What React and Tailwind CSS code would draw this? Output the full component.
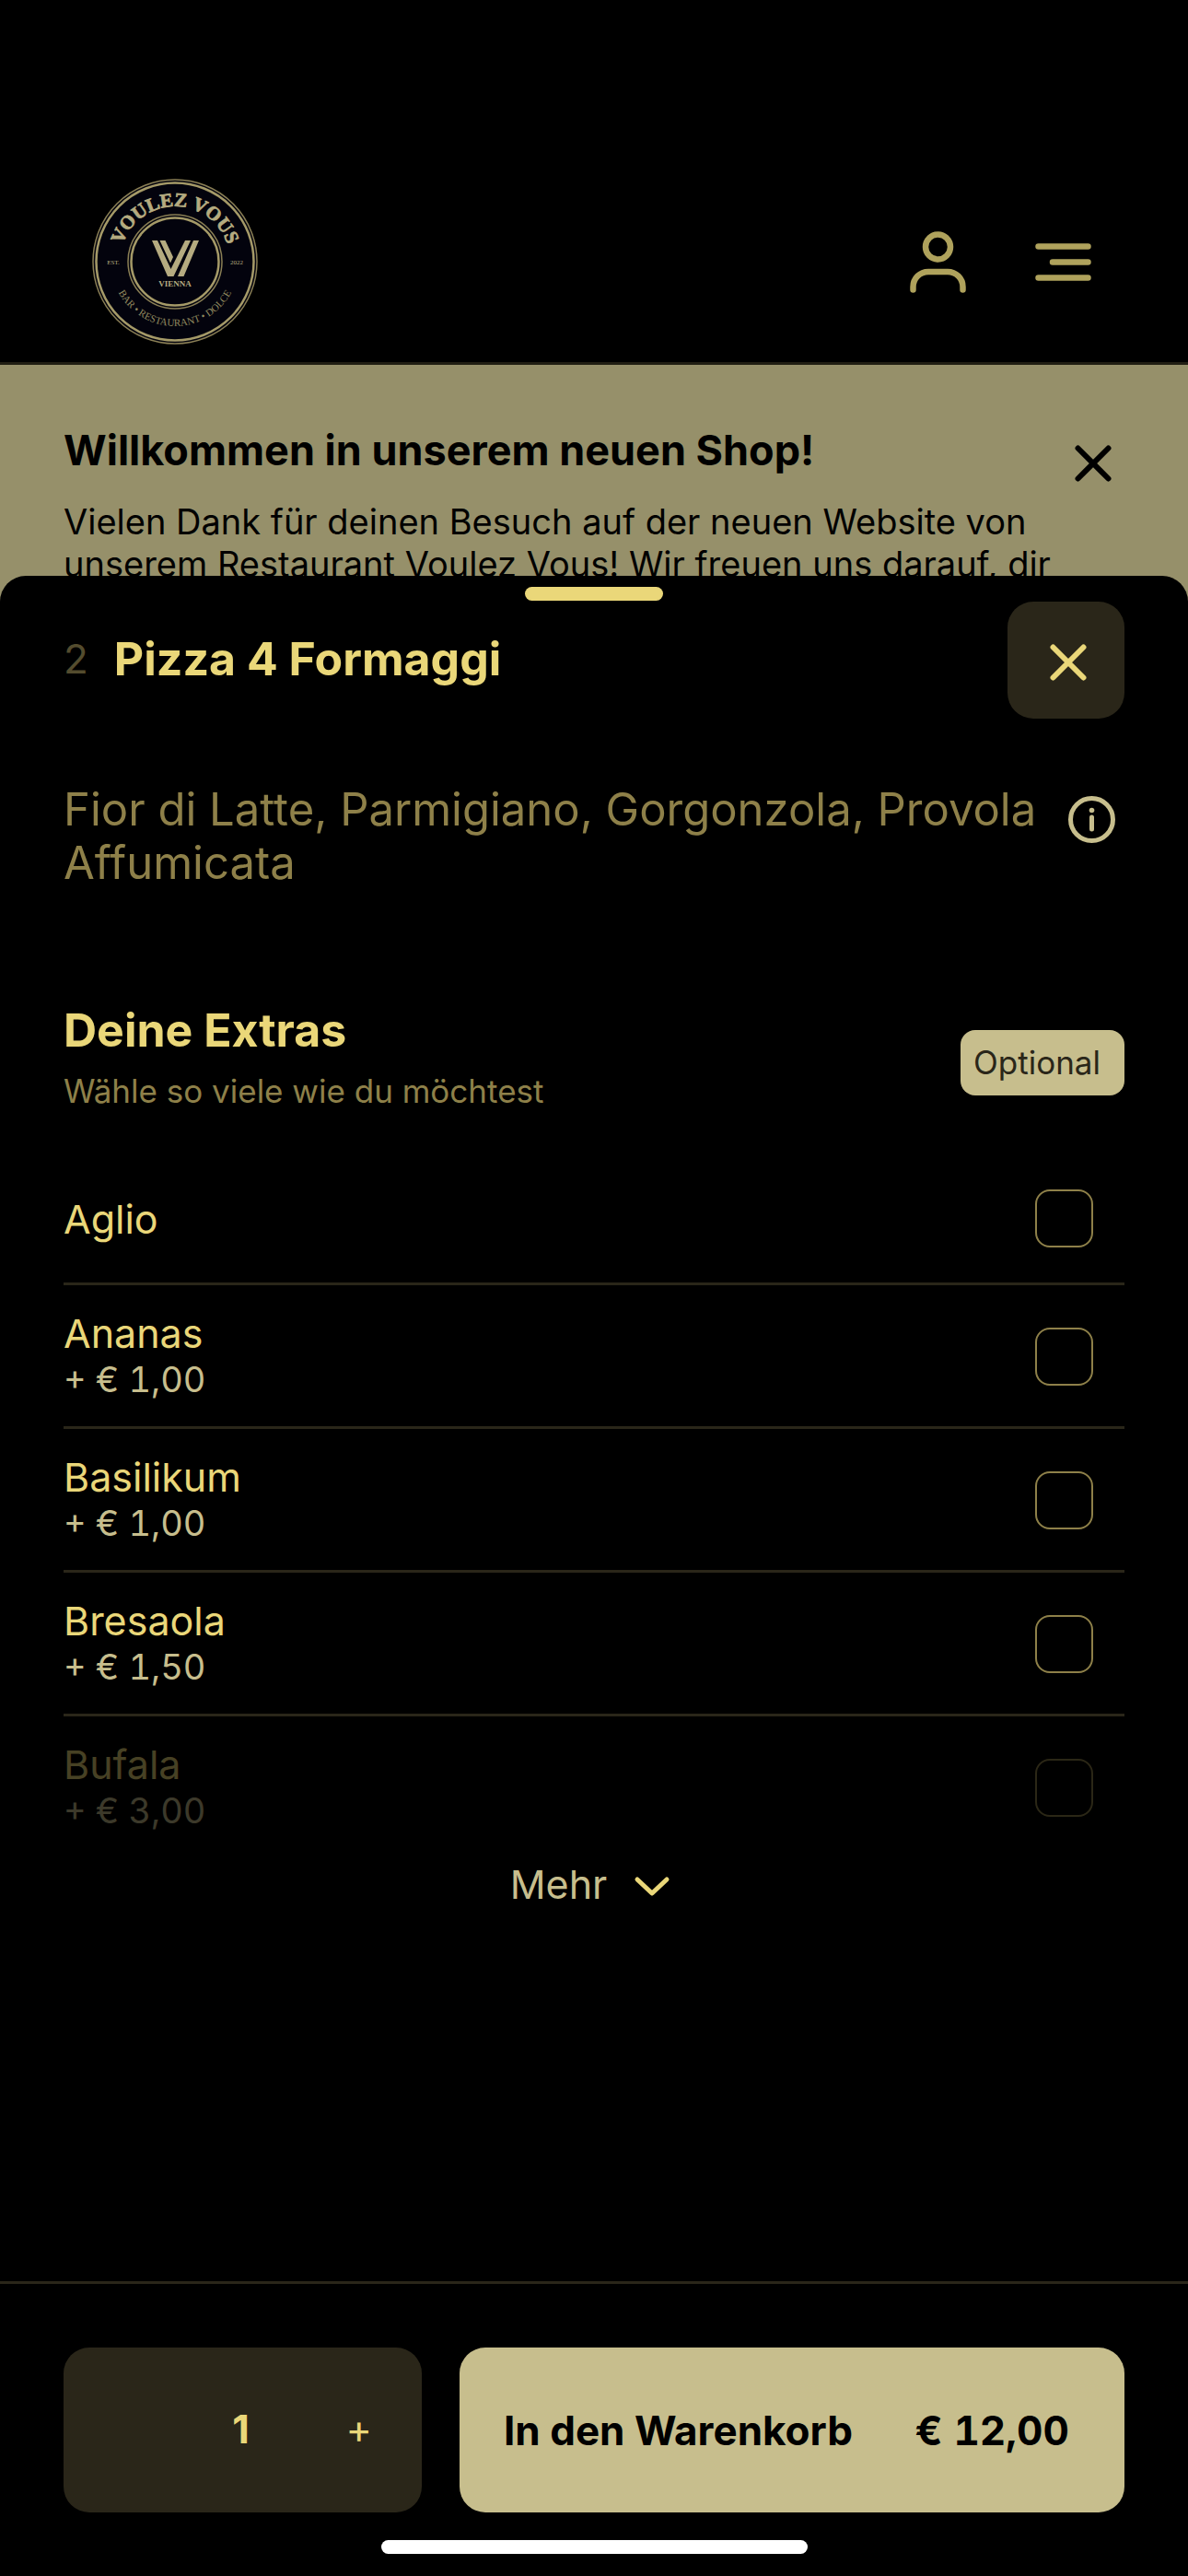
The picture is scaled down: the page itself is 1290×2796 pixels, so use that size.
import React, { useState } from "react";

const extras = [
  { id: "aglio", name: "Aglio" },
  { id: "ananas", name: "Ananas", price: "+ € 1,00" },
  { id: "basilikum", name: "Basilikum", price: "+ € 1,00" },
  { id: "bresaola", name: "Bresaola", price: "+ € 1,50" },
  { id: "bufala", name: "Bufala", price: "+ € 3,00", faded: true },
];

const Logo = () => {
  return (
    <svg
      viewBox="0 0 180 180"
      className="size-[180px]"
      role="img"
      aria-label="Voulez Vous"
    >
      <defs>
        <path id="arc-top" d="M30 90a60 60 0 0 1 120 0" />
        <path id="arc-bottom" d="M20 90a70 70 0 0 0 140 0" />
      </defs>
      <circle cx="90" cy="90" r="89" fill="#03030d" stroke="#8a7f55" strokeWidth="1.5" />
      <circle cx="90" cy="90" r="85.5" fill="none" stroke="#a59a68" strokeWidth="2.5" />
      <circle cx="90" cy="90" r="51" fill="none" stroke="#8a7f55" strokeWidth="1.5" />
      <circle cx="90" cy="90" r="47.5" fill="none" stroke="#a59a68" strokeWidth="2.5" />
      <g fill="#b5ab80" fontFamily="'Liberation Serif', serif" textAnchor="middle">
        <g fontWeight="700">
          <text fontSize="21" stroke="#b5ab80" strokeWidth="0.8">
            <textPath href="#arc-top" startOffset="50%">
              VOULEZ VOUS
            </textPath>
          </text>
          <text x="90" y="117" fontSize="9">
            VIENNA
          </text>
        </g>
        <text fontSize="11" fill="#91895f">
          <textPath href="#arc-bottom" startOffset="50%">
            BAR • RESTAURANT • DOLCE
          </textPath>
        </text>
        <text x="23" y="93" fontSize="7">
          EST.
        </text>
        <text x="157" y="93" fontSize="7">
          2022
        </text>
      </g>
      <path
        d="M65 67h6l14.500 31L101 67h6L88.500 106H82zM73.500 67h6l8.500 18-3 6.500zM110 67h6L99.500 106h-6.500z"
        fill="#b5ab80"
      />
    </svg>
  );
};

const CrossIcon = () => {
  return (
    <svg
      viewBox="0 0 40 40"
      className="size-10"
      fill="none"
      stroke="currentColor"
      strokeWidth="6"
      strokeLinecap="round"
      aria-hidden="true"
    >
      <path d="M3.500 3.500l33 33M36.500 3.500l-33 33" />
    </svg>
  );
};

const Header = () => {
  return (
    <header className="flex items-center justify-between border-b-3 border-[#211e13] pt-[194px] pr-[105px] pb-[19px] pl-[100px]">
      <a href="#home">
        <Logo />
      </a>
      <nav className="flex items-center gap-[75px] text-[#afa25c]">
        <button type="button" aria-label="Konto">
          <svg
            viewBox="0 0 61 67"
            className="h-[67px] w-[61px]"
            fill="none"
            stroke="currentColor"
            strokeWidth="6.5"
            strokeLinecap="round"
          >
            <circle cx="30.500" cy="17" r="13.500" />
            <path d="M3.500 63.500V60.500C3.500 51 11 44 20 44H41C50 44 57.500 51 57.500 60.500V63.500" />
          </svg>
        </button>
        <button type="button" aria-label="Menü">
          <svg
            viewBox="0 0 61 41"
            className="h-[41px] w-[61px]"
            fill="none"
            stroke="currentColor"
            strokeWidth="6.5"
            strokeLinecap="round"
          >
            <path d="M3.500 3.500H57.500M19 20.500H57.500M3.500 37.500H57.500" />
          </svg>
        </button>
      </nav>
    </header>
  );
};

const Banner = () => {
  return (
    <section className="flex items-start justify-between bg-[#96906a] pt-[67px] pr-[83px] pb-[26px] pl-[69px] text-black">
      <div>
        <h2 className="text-[45px] leading-[52px] font-bold">
          Willkommen in unserem neuen Shop!
        </h2>
        <p className="mt-7 max-w-[1090px] text-[38px] leading-[46px]">
          Vielen Dank für deinen Besuch auf der neuen Website von unserem
          Restaurant Voulez Vous! Wir freuen uns darauf, dir
        </p>
      </div>
      <button type="button" aria-label="Hinweis schließen" className="mt-5 -ml-10">
        <CrossIcon />
      </button>
    </section>
  );
};

const ExtraRow = ({ extra }) => {
  const [checked, setChecked] = useState(false);

  return (
    <li
      className={
        extra.faded ? "opacity-30" : "border-b-3 border-[#2a2619]"
      }
    >
      <label
        htmlFor={extra.id}
        className={
          extra.price
            ? "flex items-center justify-between pt-[26px] pr-[34px] pb-[25px]"
            : "flex items-center justify-between py-[38px] pr-[34px]"
        }
      >
        <span className={extra.price ? "flex flex-col pt-0.5" : "flex flex-col"}>
          <span className="text-[43px] leading-[48px] text-[#ead779]">
            {extra.name}
          </span>
          {extra.price && (
            <span className="text-[38px] leading-[52px] text-[#c7be8d] tabular-nums">
              {extra.price}
            </span>
          )}
        </span>
        <input
          id={extra.id}
          type="checkbox"
          checked={checked}
          onChange={() => setChecked(!checked)}
          className="size-[63px] appearance-none rounded-2xl border-2 border-[#8e8049] checked:bg-[#ead779]"
        />
      </label>
    </li>
  );
};

const Footer = ({ count, onAdd }) => {
  return (
    <footer className="mt-auto border-t-3 border-[#2a2619] pt-[69px] pb-6">
      <div className="flex gap-[41px] px-[69px]">
        <div className="grid h-[179px] w-[389px] grid-cols-3 items-center rounded-[28px] bg-[#2a2619] pr-1 pb-1 text-center text-[43px] leading-[52px] text-[#ead779]">
          <output className="col-start-2 font-bold">{count}</output>
          <button type="button" aria-label="Mehr hinzufügen" onClick={onAdd}>
            +
          </button>
        </div>
        <button
          type="button"
          className="flex flex-1 items-center justify-between rounded-[28px] bg-[#c7be8d] pr-[60px] pl-12 text-[44px] leading-[52px] font-bold text-black"
        >
          <span>In den Warenkorb</span>
          <span className="tabular-nums">€ 12,00</span>
        </button>
      </div>
      <div className="mx-auto mt-[30px] h-[15px] w-[463px] rounded-full bg-white" />
    </footer>
  );
};

const App = () => {
  const [count, setCount] = useState(1);

  return (
    <div className="flex min-h-screen flex-col bg-black font-['Inter',sans-serif]">
      <Header />
      <Banner />
      <main className="relative -mt-9 flex flex-1 flex-col rounded-t-[28px] bg-black pt-3">
        <div className="mx-auto h-[15px] w-[150px] rounded-full bg-[#ead779]" />
        <div className="mt-px px-[69px]">
          <div className="flex items-center">
            <span className="pb-1 text-[44px] leading-[60px] text-[#544c2e]">2</span>
            <h1 className="ml-7 pb-1 text-[50px] leading-[60px] font-bold text-[#ead779]">
              Pizza 4 Formaggi
            </h1>
            <button
              type="button"
              aria-label="Schließen"
              className="ml-auto flex size-[127px] items-center justify-center rounded-[28px] bg-[#2a2619] pt-1 pl-1 text-[#ead779]"
            >
              <CrossIcon />
            </button>
          </div>

          <div className="mt-[70px] flex items-start justify-between">
            <p className="max-w-[1080px] text-[49px] leading-[58px] text-[#8e8049]">
              Fior di Latte, Parmigiano, Gorgonzola, Provola Affumicata
            </p>
            <button type="button" aria-label="Info" className="mt-3.5 mr-2.5 text-[#c7be8d]">
              <svg viewBox="0 0 51 51" className="size-[51px]" fill="none" stroke="currentColor">
                <circle cx="25.500" cy="25.500" r="23" strokeWidth="5" />
                <path d="M25.500 23v13" strokeWidth="5" strokeLinecap="round" />
                <circle cx="25.500" cy="15.500" r="2.800" fill="currentColor" stroke="none" />
              </svg>
            </button>
          </div>

          <div className="mt-[122px] flex items-end justify-between">
            <div>
              <h2 className="text-[50px] leading-[60px] font-bold text-[#ead779]">
                Deine Extras
              </h2>
              <p className="mt-[15px] text-[35px] leading-[42px] text-[#8e8049]">
                Wähle so viele wie du möchtest
              </p>
            </div>
            <span className="mb-4 rounded-2xl bg-[#c7be8d] py-3.5 pr-[26px] pl-3.5 text-[35px] leading-[43px] text-[#2a2619]">
              Optional
            </span>
          </div>

          <ul className="mt-12">
            {extras.map((extra) => (
              <ExtraRow key={extra.id} extra={extra} />
            ))}
          </ul>

          <button
            type="button"
            className="mx-auto mt-[3px] flex items-center gap-[25px] pr-1 text-[43px] leading-[52px] text-[#c7be8d]"
          >
            Mehr
            <svg
              viewBox="0 0 48 48"
              className="size-12 text-[#ead779]"
              fill="none"
              stroke="currentColor"
              strokeWidth="5"
              strokeLinecap="round"
              strokeLinejoin="round"
              aria-hidden="true"
            >
              <path d="M8 19l16 15 16-15" />
            </svg>
          </button>
        </div>
        <Footer count={count} onAdd={() => setCount(count + 1)} />
      </main>
    </div>
  );
};

export default App;
